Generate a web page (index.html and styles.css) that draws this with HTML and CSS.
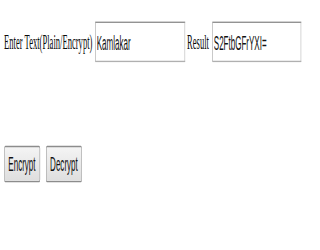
FILE: index.html
```html
<!DOCTYPE html>
<html>
<head>
<meta charset="utf-8">
<link rel="stylesheet" href="styles.css">
</head>
<body>
<div class="page">
  <div class="row">
    <label class="lbl" for="plain">Enter Text(Plain/Encrypt)</label>
    <input id="plain" class="field field-plain" type="text" value="Kamlakar">
    <span class="lbl lbl-result">Result</span>
    <input class="field field-result" type="text" value="S2FtbGFrYXI=">
  </div>
  <div class="actions">
    <button class="btn" type="button">Encrypt</button>
    <button class="btn" type="button">Decrypt</button>
  </div>
</div>
</body>
</html>
```

FILE: styles.css
```css
html, body {
  margin: 0;
  padding: 0;
  background: #ffffff;
}

body {
  width: 320px;
  height: 250px;
  overflow: hidden;
}

.page {
  width: 580px;
  height: 185px;
  padding: 16px 0 0 7.5px;
  box-sizing: border-box;
  transform: scale(0.535, 1.35);
  transform-origin: 0 0;
  font-family: "Liberation Serif", "Times New Roman", serif;
  font-size: 16px;
  color: #0a0a0a;
}

.row {
  display: flex;
  align-items: center;
  height: 30px;
}

.lbl {
  white-space: nowrap;
  line-height: 1;
}

.field {
  box-sizing: border-box;
  height: 30px;
  padding: 0 2px;
  border: 1px solid #b0b0b0;
  border-top-color: #8e8e8e;
  border-left-color: #9a9a9a;
  font-family: "Liberation Sans", Arial, sans-serif;
  font-size: 15px;
  color: #111111;
  background: #ffffff;
  outline: none;
}

.field-plain {
  width: 168px;
  margin-left: 5px;
  margin-right: 4px;
}

.field-result {
  width: 166px;
  margin-left: 6px;
}

.actions {
  display: flex;
  gap: 11.5px;
  margin-top: 62px;
}

.btn {
  box-sizing: border-box;
  width: 67px;
  height: 27px;
  padding: 0;
  border: 1px solid #8c8c8c;
  border-radius: 2px;
  background: linear-gradient(#f4f4f4, #dedede);
  font-family: "Liberation Sans", Arial, sans-serif;
  font-size: 15px;
  color: #111111;
}
```
